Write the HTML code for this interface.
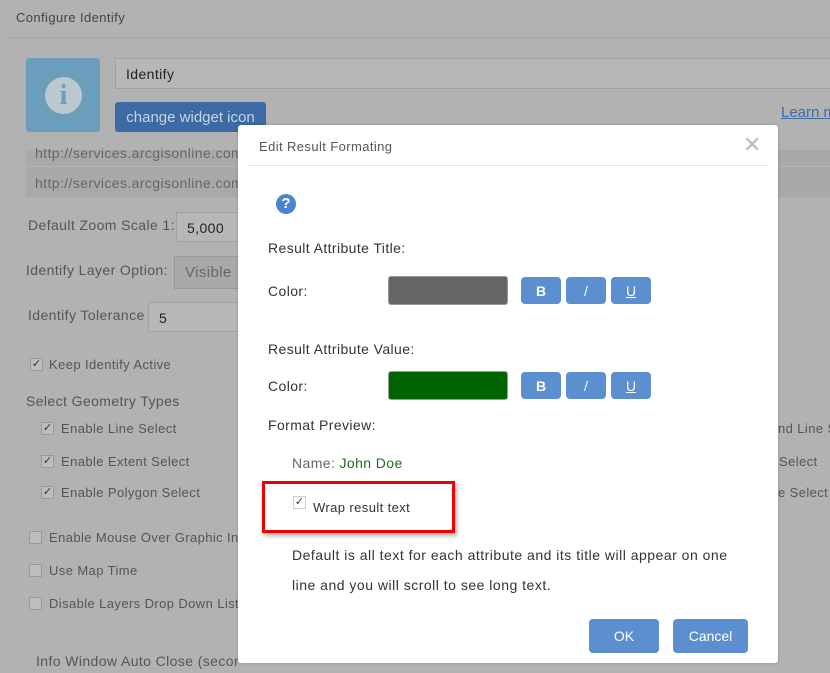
<!DOCTYPE html>
<html><head><style>
body{margin:0;width:830px;height:673px;overflow:hidden;background:#b2b2b2;font-family:"Liberation Sans",sans-serif;position:relative;color:#555}
.a{position:absolute}
.t{font-size:14px;color:#555;white-space:nowrap;letter-spacing:.4px}
.cb{position:absolute;width:11px;height:11px;border:1px solid #999;background:#bdbdbd;font-size:11px;line-height:11px;text-align:center;color:#333}
.btn{position:absolute;background:#5b8fcf;color:#fff;border-radius:4px;text-align:center;font-size:14px}
</style></head><body>
<div class="a t" style="left:16px;top:10px;font-size:13px;color:#444">Configure Identify</div>
<div class="a" style="left:8px;top:37px;width:822px;height:1px;background:#a5a5a5"></div>
<div class="a" style="left:26px;top:58px;width:74px;height:74px;background:#6b9dbc;border-radius:3px"></div>
<div class="a" style="left:45px;top:77px;width:37px;height:37px;border-radius:50%;background:#bcc8cf;color:#6b9dbc;font:bold 28px 'Liberation Serif',serif;text-align:center;line-height:38px">i</div>
<div class="a" style="left:115px;top:58px;width:715px;height:29px;border:1px solid #a0a0a0;background:#b7b7b7"></div>
<div class="a t" style="left:126px;top:66px;color:#222">Identify</div>
<div class="btn" style="left:115px;top:102px;width:151px;height:30px;line-height:31px;background:#3c6aa4;color:#c8d4e4;font-size:15px;border-radius:3px">change widget icon</div>
<div class="a" style="left:781px;top:104px;color:#3c6aa4;font-size:15px;text-decoration:underline;white-space:nowrap">Learn m</div>
<div class="a" style="left:26px;top:150px;width:804px;height:47px;background:#a9a9a9"></div>
<div class="a" style="left:26px;top:166px;width:804px;height:1px;background:#b5b5b5"></div>
<div class="a t" style="left:35px;top:145px;color:#666">http://services.arcgisonline.com</div>
<div class="a t" style="left:35px;top:175px;color:#666">http://services.arcgisonline.com</div>
<div class="a t" style="left:28px;top:217px">Default Zoom Scale 1:</div>
<div class="a" style="left:176px;top:212px;width:70px;height:28px;border:1px solid #a0a0a0;background:#b7b7b7"></div>
<div class="a t" style="left:187px;top:220px;color:#222">5,000</div>
<div class="a t" style="left:26px;top:262px">Identify Layer Option:</div>
<div class="a" style="left:174px;top:256px;width:70px;height:31px;border:1px solid #999;background:#a9a9a9"></div>
<div class="a t" style="left:185px;top:264px;font-size:15px;color:#666">Visible</div>
<div class="a t" style="left:28px;top:307px">Identify Tolerance</div>
<div class="a" style="left:148px;top:302px;width:100px;height:28px;border:1px solid #a0a0a0;background:#b7b7b7"></div>
<div class="a t" style="left:159px;top:310px;color:#222">5</div>
<div class="cb" style="left:30px;top:358px">✓</div><div class="a t" style="left:49px;top:357px;font-size:13px">Keep Identify Active</div>
<div class="a t" style="left:26px;top:393px">Select Geometry Types</div>
<div class="cb" style="left:41px;top:422px">✓</div><div class="a t" style="left:61px;top:421px;font-size:13px">Enable Line Select</div>
<div class="cb" style="left:41px;top:455px">✓</div><div class="a t" style="left:61px;top:454px;font-size:13px">Enable Extent Select</div>
<div class="cb" style="left:41px;top:486px">✓</div><div class="a t" style="left:61px;top:485px;font-size:13px">Enable Polygon Select</div>
<div class="cb" style="left:29px;top:531px"></div><div class="a t" style="left:49px;top:530px;font-size:13px">Enable Mouse Over Graphic Info</div>
<div class="cb" style="left:29px;top:564px"></div><div class="a t" style="left:49px;top:563px;font-size:13px">Use Map Time</div>
<div class="cb" style="left:29px;top:597px"></div><div class="a t" style="left:49px;top:596px;font-size:13px">Disable Layers Drop Down List</div>
<div class="a t" style="left:36px;top:653px;width:202px;overflow:hidden">Info Window Auto Close (seconds)</div>
<div class="a t" style="left:778px;top:421px;font-size:13px">nd Line S</div>
<div class="a t" style="left:779px;top:454px;font-size:13px">Select</div>
<div class="a t" style="left:778px;top:485px;font-size:13px">e Select</div>

<div class="a" style="left:238px;top:125px;width:540px;height:538px;background:#fff;border-radius:3px;box-shadow:0 0 3px rgba(0,0,0,.2)"></div>
<div class="a t" style="left:259px;top:139px;font-size:13px;color:#555">Edit Result Formating</div>
<div class="a" style="left:743px;top:134px;font-size:22px;color:#bbb;line-height:22px">✕</div>
<div class="a" style="left:248px;top:165px;width:520px;height:1px;background:#e4e4e4"></div>
<div class="a" style="left:276px;top:194px;width:20px;height:20px;border-radius:50%;background:#4a86cf;color:#fff;font:bold 15px 'Liberation Sans';text-align:center;line-height:20px">?</div>
<div class="a t" style="left:268px;top:240px;color:#333">Result Attribute Title:</div>
<div class="a t" style="left:268px;top:283px;color:#333">Color:</div>
<div class="a" style="left:388px;top:276px;width:118px;height:27px;background:#666;border:1px solid #999;border-radius:3px"></div>
<div class="btn" style="left:521px;top:277px;width:40px;height:27px;line-height:28px;font-weight:bold">B</div>
<div class="btn" style="left:566px;top:277px;width:40px;height:27px;line-height:28px">/</div>
<div class="btn" style="left:611px;top:277px;width:40px;height:27px;line-height:28px;text-decoration:underline">U</div>
<div class="a t" style="left:268px;top:341px;color:#333">Result Attribute Value:</div>
<div class="a t" style="left:268px;top:378px;color:#333">Color:</div>
<div class="a" style="left:388px;top:371px;width:118px;height:27px;background:#006400;border:1px solid #999;border-radius:3px"></div>
<div class="btn" style="left:521px;top:372px;width:40px;height:27px;line-height:28px;font-weight:bold">B</div>
<div class="btn" style="left:566px;top:372px;width:40px;height:27px;line-height:28px">/</div>
<div class="btn" style="left:611px;top:372px;width:40px;height:27px;line-height:28px;text-decoration:underline">U</div>
<div class="a t" style="left:268px;top:417px;color:#333">Format Preview:</div>
<div class="a t" style="left:292px;top:455px;color:#666">Name: <span style="color:#1e6e1e">John Doe</span></div>
<div class="a" style="left:262px;top:481px;width:187px;height:46px;border:3px solid #e00;box-shadow:2px 3px 4px rgba(0,0,0,.3)"></div>
<div class="cb" style="left:293px;top:496px;background:#fff;border-color:#ccc">✓</div>
<div class="a t" style="left:313px;top:500px;font-size:13px;color:#333">Wrap result text</div>
<div class="a t" style="left:292px;top:547px;color:#333;letter-spacing:.5px">Default is all text for each attribute and its title will appear on one</div>
<div class="a t" style="left:292px;top:577px;color:#333;letter-spacing:.5px">line and you will scroll to see long text.</div>
<div class="btn" style="left:589px;top:619px;width:70px;height:34px;line-height:34px">OK</div>
<div class="btn" style="left:673px;top:619px;width:75px;height:34px;line-height:34px">Cancel</div>
</body></html>
